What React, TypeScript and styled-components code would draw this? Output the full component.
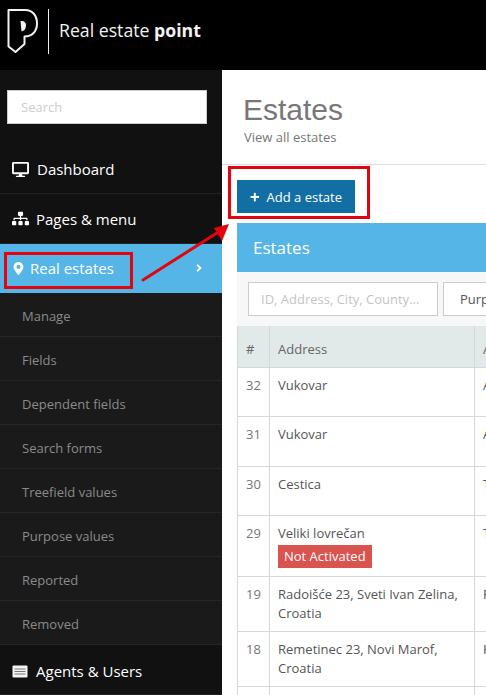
import React from 'react'
import styled, { createGlobalStyle } from 'styled-components'
import { FaDesktop, FaSitemap, FaMapMarkerAlt, FaPlus, FaAngleRight } from 'react-icons/fa'

const GlobalStyle = createGlobalStyle`
  html, body {
    margin: 0;
    padding: 0;
    height: 100%;
    overflow: hidden;
    background: #fff;
    font-family: "Open Sans", "Liberation Sans", sans-serif;
  }
  * { box-sizing: border-box; }
`

const Page = styled.div`
  position: relative;
  width: 486px;
  height: 695px;
  overflow: hidden;
`

const TopBar = styled.header`
  display: flex;
  align-items: center;
  height: 70px;
  background: #000;
  padding: 0 0 8px 7px;
`

const Divider = styled.span`
  width: 1px;
  height: 45px;
  margin: 0 10px 0 9px;
  background: #eee;
`

const Brand = styled.div`
  padding-bottom: 3px;
  color: #f2f2f2;
  font-size: 17.7px;
  b { font-weight: 700; }
`

const Main = styled.div`
  display: flex;
  height: 625px;
`

const Sidebar = styled.aside`
  flex: 0 0 222px;
  background: #111;
  padding-top: 20px;
`

const SearchBox = styled.input`
  display: block;
  width: 200px;
  height: 34px;
  margin: 0 0 21px 7px;
  padding: 0 13px;
  background: #fff;
  border: 1px solid #ccc;
  font: 13px "Open Sans", sans-serif;
  &::placeholder { color: #ccc; }
`

const NavItem = styled.div<{ $active?: boolean; $h: number; $gap: number; $top?: number }>`
  display: flex;
  align-items: center;
  gap: ${p => p.$gap}px;
  height: ${p => p.$h}px;
  padding: ${p => p.$top || 0}px 12px 0;
  color: #fff;
  font-size: 15px;
  background: ${p => (p.$active ? '#55b5e6' : '#111')};
  border-bottom: 1px solid ${p => (p.$active ? '#55b5e6' : '#222')};
  svg { flex: none; }
  em { margin-left: auto; margin-right: 5px; display: flex; font-style: normal; }
`

const SubItem = styled.div`
  display: flex;
  align-items: center;
  height: 44px;
  padding: 2px 0 0 22px;
  color: #8a8a8a;
  font-size: 13px;
  background: #1a1a1a;
  border-bottom: 1px solid #252525;
`

const Content = styled.main`
  flex: 1;
  min-width: 0;
`

const PageHead = styled.div`
  height: 95px;
  padding: 23px 0 0 22px;
  border-bottom: 1px solid #ddd;
`

const Title = styled.h1`
  margin: 0 0 0 -1px;
  color: #777;
  font: 400 30px/34px "Liberation Sans", Arial, sans-serif;
`

const Subtitle = styled.div`
  margin-top: 1px;
  color: #777;
  font-size: 13px;
`

const Body = styled.div`
  padding: 15px 0 0 15px;
`

const AddButton = styled.button`
  display: flex;
  align-items: center;
  gap: 7px;
  width: 118px;
  height: 33px;
  padding: 0 13px;
  border: 0;
  background: #136fa3;
  color: #fff;
  font: 13px "Open Sans", sans-serif;
  white-space: nowrap;
`

const Panel = styled.section`
  width: 400px;
  margin-top: 10px;
`

const PanelHead = styled.div`
  height: 49px;
  padding-left: 16px;
  background: #55b5e6;
  color: #fff;
  font-size: 17px;
  line-height: 49px;
`

const Filters = styled.div`
  display: flex;
  gap: 5px;
  height: 54px;
  padding: 10px 0 0 11px;
  background: #f7f7f7;
`

const FilterBox = styled.div<{ $muted?: boolean }>`
  flex: 0 0 190px;
  height: 34px;
  padding-left: ${p => (p.$muted ? 12 : 16)}px;
  background: #fff;
  border: 1px solid #ccc;
  color: ${p => (p.$muted ? '#c4c4c4' : '#555')};
  font-size: 13px;
  line-height: 32px;
  white-space: nowrap;
`

const Table = styled.table`
  width: 400px;
  table-layout: fixed;
  border-collapse: collapse;
  color: #555;
  font-size: 13px;
  line-height: 19px;
  th, td {
    padding: 8px;
    border: 1px solid #d5d8d8;
    border-top: 0;
    text-align: left;
    vertical-align: top;
    overflow: hidden;
    white-space: normal;
  }
  th {
    height: 41px;
    padding: 11px 8px 5px;
    font-weight: 400;
    vertical-align: middle;
    background: #e1e9e9;
    color: #666;
  }
`

const Row = styled.tr<{ $h: number }>`
  height: ${p => p.$h}px;
`

const NumCell = styled.td`
  color: #777;
`

const Badge = styled.span`
  display: inline-block;
  margin-top: 2px;
  padding: 0 6px;
  height: 23px;
  background: #d9534f;
  color: #fff;
  font-size: 13px;
  line-height: 23px;
`

const Overlay = styled.svg`
  position: absolute;
  inset: 0;
  pointer-events: none;
`

const subItems = ['Manage', 'Fields', 'Dependent fields', 'Search forms', 'Treefield values', 'Purpose values', 'Reported', 'Removed']

const rows: { id: number; address: string; other: string; h: number; badge?: boolean }[] = [
  { id: 32, address: 'Vukovar', other: 'Apartment', h: 49 },
  { id: 31, address: 'Vukovar', other: 'Apartment', h: 50 },
  { id: 30, address: 'Cestica', other: 'Terrain', h: 49 },
  { id: 29, address: 'Veliki lovrečan', other: 'Terrain', h: 61, badge: true },
  { id: 19, address: 'Radoišće 23, Sveti Ivan Zelina, Croatia', other: 'Poslovni', h: 54 },
  { id: 18, address: 'Remetinec 23, Novi Marof, Croatia', other: 'Kuća 9', h: 54 },
  { id: 17, address: '', other: '', h: 40 }
]

const Logo = () => (
  <svg width="32" height="46" viewBox="0 0 32 46" fill="none">
    <path
      d="M1.5 2 H18 C25.5 2 30 7.5 30 15.5 C30 23.5 25 28.5 17.5 28.5 V36 L8.5 44 L1.5 38.5 Z"
      stroke="#f2f2f2"
      strokeWidth="2"
      strokeLinejoin="round"
    />
    <path d="M13.5 13 C17 12.5 19 14 19 17.5 C19 21 17 23 14.5 23.5 Z" fill="#f2f2f2" />
  </svg>
)

const AgentsIcon = () => (
  <svg width="16" height="13" viewBox="0 0 16 13">
    <rect x="0.5" y="0.5" width="15" height="12" rx="1" fill="#f4f4f4" />
    <path d="M2.5 4 H13.5 M2.5 6.5 H13.5 M2.5 9 H13.5" stroke="#77757f" strokeWidth="1" />
  </svg>
)

export default function App() {
  return (
    <Page>
      <GlobalStyle />
      <TopBar>
        <Logo />
        <Divider />
        <Brand>Real estate <b>point</b></Brand>
      </TopBar>
      <Main>
        <Sidebar>
          <SearchBox placeholder="Search" readOnly />
          <NavItem $h={49} $gap={8}><FaDesktop size={17} />Dashboard</NavItem>
          <NavItem $h={50} $gap={7}><FaSitemap size={17} />Pages &amp; menu</NavItem>
          <NavItem $active $h={49} $gap={5}>
            <FaMapMarkerAlt size={13} />Real estates
            <em><FaAngleRight size={12} /></em>
          </NavItem>
          {subItems.map(s => <SubItem key={s}>{s}</SubItem>)}
          <NavItem $h={50} $gap={8} $top={3}><AgentsIcon />Agents &amp; Users</NavItem>
        </Sidebar>
        <Content>
          <PageHead>
            <Title>Estates</Title>
            <Subtitle>View all estates</Subtitle>
          </PageHead>
          <Body>
            <AddButton><FaPlus size={10} />Add a estate</AddButton>
            <Panel>
              <PanelHead>Estates</PanelHead>
              <Filters>
                <FilterBox $muted>ID, Address, City, County...</FilterBox>
                <FilterBox>Purpose</FilterBox>
              </Filters>
              <Table>
                <colgroup>
                  <col style={{ width: 32 }} />
                  <col style={{ width: 205 }} />
                  <col />
                </colgroup>
                <thead>
                  <tr><th>#</th><th>Address</th><th>Agent</th></tr>
                </thead>
                <tbody>
                  {rows.map(r => (
                    <Row key={r.id} $h={r.h}>
                      <NumCell>{r.address ? r.id : ''}</NumCell>
                      <td>
                        {r.address}
                        {r.badge && <div><Badge>Not Activated</Badge></div>}
                      </td>
                      <td>{r.other}</td>
                    </Row>
                  ))}
                </tbody>
              </Table>
            </Panel>
          </Body>
        </Content>
      </Main>
      <Overlay width="486" height="695" viewBox="0 0 486 695">
        <rect x="5.5" y="253.5" width="126" height="34" fill="none" stroke="#e2050f" strokeWidth="3" />
        <rect x="229.5" y="167.5" width="139" height="50" fill="none" stroke="#e2050f" strokeWidth="3" />
        <line x1="143" y1="280" x2="220" y2="231" stroke="#e2050f" strokeWidth="3" strokeLinecap="round" />
        <polygon points="229,224 214,228 222,241" fill="#e2050f" />
      </Overlay>
    </Page>
  )
}
